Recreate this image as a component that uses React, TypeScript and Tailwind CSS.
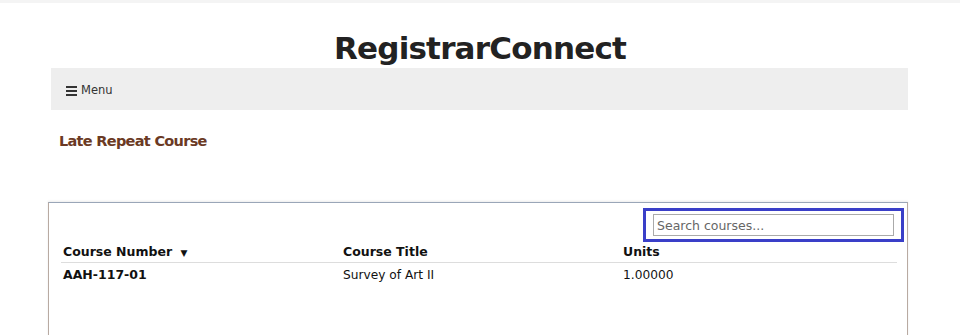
import React from "react";

export default function App() {
  const font = { fontFamily: '"DejaVu Sans", Verdana, sans-serif' };
  return (
    <div className="w-[960px] h-[335px] bg-white overflow-hidden" style={font}>
      <div className="h-[3px] bg-[#f4f4f4]" />
      <div className="h-[65px] flex items-end justify-center">
        <h1 className="text-[31px] leading-[40px] font-bold text-[#222] tracking-[-0.8px] mb-0">
          RegistrarConnect
        </h1>
      </div>
      <div className="mx-[51px] w-[857px] h-[42px] bg-[#eeeeee] flex items-center pl-[15px] pt-[4px] text-[11.5px] text-[#333]">
        <svg width="11" height="10" viewBox="0 0 11 10" className="mr-[4px]">
          <rect x="0" y="0" width="11" height="2" fill="#333" />
          <rect x="0" y="4" width="11" height="2" fill="#333" />
          <rect x="0" y="8" width="11" height="2" fill="#333" />
        </svg>
        <span>Menu</span>
      </div>
      <div className="pl-[59px] pt-[21px] h-[92px]">
        <h2 className="text-[14.5px] leading-[20px] font-bold text-[#6b3a24] tracking-[-0.7px]">Late Repeat Course</h2>
      </div>
      <div className="ml-[48px] w-[860px] border-t border-t-[#9aa6b8] border-x border-x-[#b8aaa2] h-[200px] shadow-[0_-1px_2px_rgba(0,0,0,0.08)]">
        <div className="flex justify-end pr-[3px] pt-[5px]">
          <div className="border-[3px] border-[#3a3fc8] px-[7px] py-[3px] w-[261px]">
            <input
              placeholder="Search courses..."
              className="block w-full h-[22px] border border-[#aaa] px-[3px] text-[12.5px] text-[#333] placeholder:text-[#666] outline-none"
              style={font}
            />
          </div>
        </div>
        <div className="pl-[12px] pr-[10px]">
          <div className="grid grid-cols-[280px_280px_1fr] border-b border-[#dddddd] h-[21px] items-center text-[12.5px] font-bold text-[#111]">
            <div className="pl-[2px]">
              Course Number <span className="text-[9px] ml-[4px]">▼</span>
            </div>
            <div className="pl-[2px]">Course Title</div>
            <div className="pl-[2px]">Units</div>
          </div>
          <div className="grid grid-cols-[280px_280px_1fr] h-[23px] pt-[1px] items-center text-[12.2px] text-[#111]">
            <div className="pl-[2px] font-bold text-[12.5px]">AAH-117-01</div>
            <div className="pl-[2px]">Survey of Art II</div>
            <div className="pl-[2px]">1.00000</div>
          </div>
        </div>
      </div>
    </div>
  );
}
